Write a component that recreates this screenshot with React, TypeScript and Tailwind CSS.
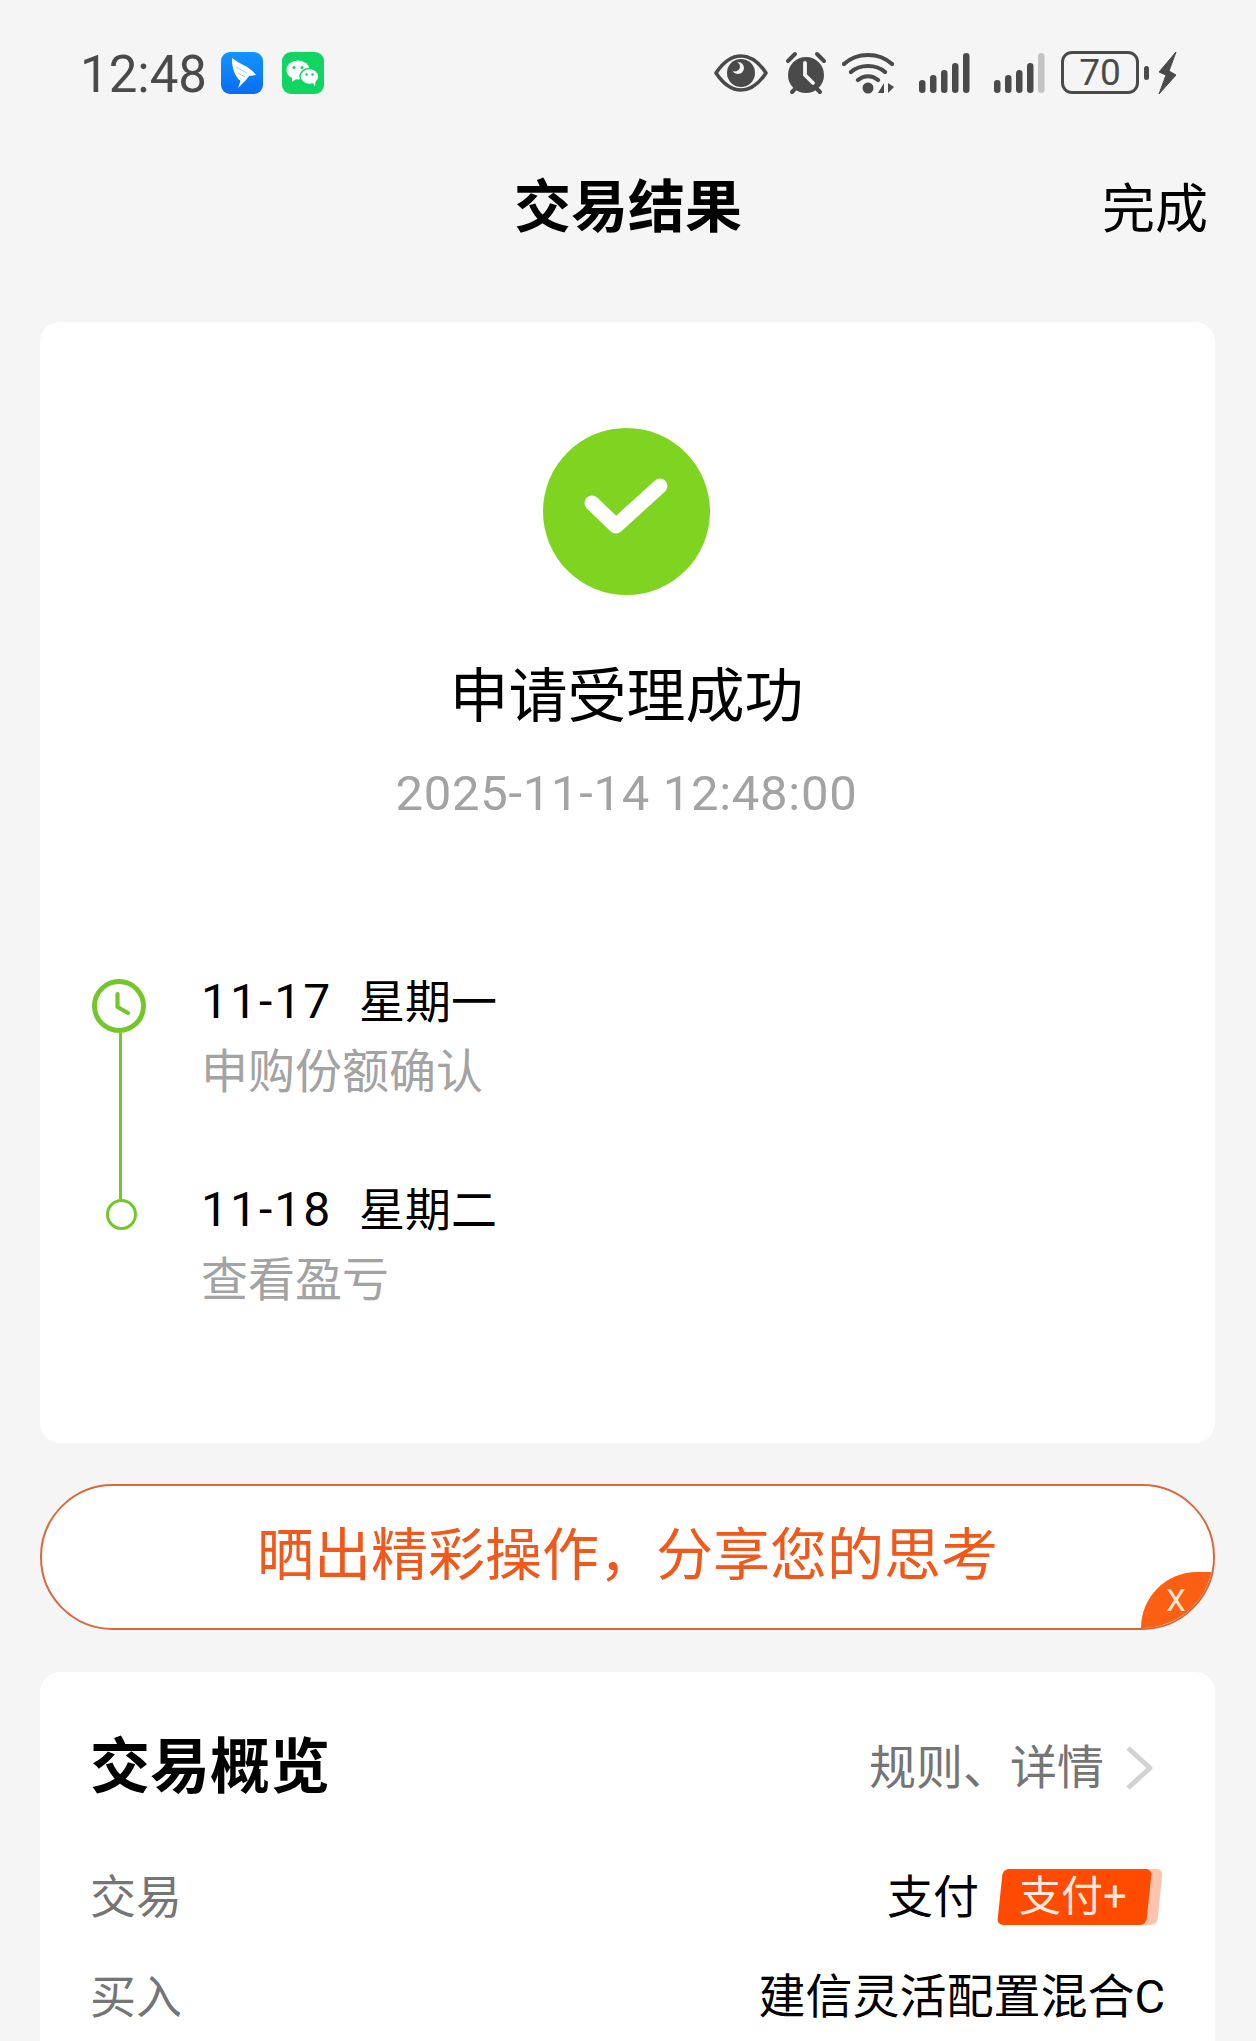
import React from 'react';

const CJK = "font-['Roboto','Noto_Sans_CJK_SC',sans-serif]";

const SignalBars = ({ lastDim = false }: { lastDim?: boolean }) => (
    <svg width="52" height="42" viewBox="0 0 52 42" className="block">
        <rect x="0" y="28" width="6.5" height="13" rx="3.2" fill="#4a4a4a" />
        <rect x="11" y="23" width="6.5" height="18" rx="3.2" fill="#4a4a4a" />
        <rect x="22" y="18" width="6.5" height="23" rx="3.2" fill="#4a4a4a" />
        <rect x="33" y="11" width="6.5" height="30" rx="3.2" fill="#4a4a4a" />
        <rect x="44" y="1" width="6.5" height="40" rx="3.2" fill={lastDim ? '#c4c4c4' : '#4a4a4a'} />
    </svg>
);

const AppBadges = () => (
    <div className="flex items-center gap-[19px] ml-[14px] -mt-[2px]">
        <svg width="42" height="42" viewBox="0 0 42 42" className="block">
            <defs>
                <linearGradient id="dingBg" x1="0" y1="0" x2="0" y2="1">
                    <stop offset="0" stopColor="#1296ff" />
                    <stop offset="1" stopColor="#0a6cf0" />
                </linearGradient>
            </defs>
            <rect width="42" height="42" rx="9" fill="url(#dingBg)" />
            <path d="M11 6 C18 12 29 14 35 23 L28 24 L25 28 L17 36 L19.5 29 C14 25 10.5 15 11 6Z" fill="#fff" />
            <path d="M15 15 L26 21 M17 21 L24 25" stroke="#9fd2ff" strokeWidth="1" fill="none" />
        </svg>
        <svg width="42" height="42" viewBox="0 0 42 42" className="block">
            <rect width="42" height="42" rx="9" fill="#10d562" />
            <ellipse cx="16" cy="18" rx="11.5" ry="9.5" fill="#fff" />
            <path d="M10 25 L10 30 L15 26.5Z" fill="#fff" />
            <ellipse cx="27.5" cy="24.5" rx="9.5" ry="8" fill="#fff" stroke="#10d562" strokeWidth="1.5" />
            <path d="M31 31 L33 34.5 L33.5 29Z" fill="#fff" />
            <circle cx="12" cy="15.5" r="1.5" fill="#10d562" />
            <circle cx="20" cy="15.5" r="1.5" fill="#10d562" />
            <circle cx="24.5" cy="22.5" r="1.3" fill="#10d562" />
            <circle cx="30.5" cy="22.5" r="1.3" fill="#10d562" />
        </svg>
    </div>
);

const StatusIcons = () => (
    <div className="flex items-center -mt-[3px]">
        {/* eye */}
        <svg width="54" height="38" viewBox="0 0 54 38" className="block">
            <path d="M2 19 C10 7 18 2 27 2 C36 2 44 7 52 19 C44 31 36 36 27 36 C18 36 10 31 2 19Z" fill="none" stroke="#4a4a4a" strokeWidth="3.6" strokeLinejoin="round" />
            <circle cx="27" cy="19" r="14" fill="#4a4a4a" />
            <circle cx="24" cy="14" r="6" fill="#f5f5f5" />
            <circle cx="21" cy="12.5" r="5" fill="#4a4a4a" />
        </svg>
        {/* alarm */}
        <svg width="44" height="44" viewBox="0 0 44 44" className="block ml-[16px]">
            <circle cx="22" cy="24" r="18" fill="#4a4a4a" />
            <path d="M4 10 L11 3 M33 3 L40 10 M8 41 L12 37 M36 41 L32 37" stroke="#4a4a4a" strokeWidth="4" strokeLinecap="round" />
            <path d="M21 12 L21 24 L29 32" stroke="#f5f5f5" strokeWidth="3.8" fill="none" strokeLinecap="round" strokeLinejoin="round" />
        </svg>
        {/* wifi */}
        <svg width="54" height="44" viewBox="0 0 54 44" className="block ml-[14px]">
            <path d="M2 13 C15 1 37 1 50 13 M9 21 C18 13 34 13 43 21 M16 29 C22 24 30 24 36 29" fill="none" stroke="#4a4a4a" strokeWidth="4.2" strokeLinecap="round" />
            <circle cx="26" cy="37" r="5.5" fill="#4a4a4a" />
            <path d="M42 32 L42 42 L36 42Z M46 32 L46 42 L52 36Z" fill="#4a4a4a" />
        </svg>
        <div className="ml-[23px]"><SignalBars /></div>
        <div className="ml-[23px]"><SignalBars lastDim /></div>
        {/* battery */}
        <div className="ml-[15px] flex items-center">
            <div className="w-[78px] h-[43px] rounded-[11px] border-[3px] border-[#4a4a4a] flex items-center justify-center text-[#4a4a4a] text-[37px] leading-none font-['Roboto',sans-serif]">70</div>
            <div className="w-[5px] h-[14px] rounded-full bg-[#4a4a4a] ml-[5px]" />
        </div>
        <svg width="22" height="44" viewBox="0 0 22 44" className="block ml-[7px]">
            <path d="M20 1 L3 21 L10 24 L3 43 L20 24 L13 20 L20 1Z" fill="#4a4a4a" stroke="#4a4a4a" strokeWidth="1" strokeLinejoin="round" />
        </svg>
    </div>
);

const StatusBar = () => (
    <div className="h-[146px] pl-[80px] pr-[78px] flex items-center justify-between pt-[2px]">
        <div className="flex items-center">
            <span className="text-[51px] leading-none text-[#4a4a4a] font-['Roboto',sans-serif]">12:48</span>
            <AppBadges />
        </div>
        <StatusIcons />
    </div>
);

const TimelineRow = ({ date, week, desc }: { date: string; week: string; desc: string }) => (
    <div className="h-[208px]">
        <p className="text-[46px] leading-[60px] text-black flex">
            <span className="w-[158px] text-[48px] tracking-[2px]">{date}</span>
            <span>{week}</span>
        </p>
        <p className="text-[47px] leading-[60px] mt-[10px] text-[#a3a3a3]">{desc}</p>
    </div>
);

const Timeline = () => (
    <div className="flex mt-[147px] pl-[52px]">
        <div className="w-[109px] flex flex-col items-start shrink-0 pt-[8px]">
            <svg width="54" height="54" viewBox="0 0 54 54" className="block">
                <circle cx="27" cy="27" r="24.5" fill="none" stroke="#74c62a" strokeWidth="5" />
                <path d="M25.5 15 L25.5 28 L36 34" fill="none" stroke="#74c62a" strokeWidth="4.2" strokeLinecap="round" strokeLinejoin="round" />
            </svg>
            <div className="w-[3px] h-[166px] bg-[#74c62a] ml-[27px]" />
            <div className="w-[31px] h-[31px] rounded-full border-[3px] border-[#74c62a] ml-[14px]" />
        </div>
        <div className="flex flex-col pt-[1px]">
            <TimelineRow date="11-17" week="星期一" desc="申购份额确认" />
            <TimelineRow date="11-18" week="星期二" desc="查看盈亏" />
        </div>
    </div>
);

const ResultCard = () => (
    <section className="bg-white rounded-[20px] h-[1121px] pt-[106px] flex flex-col">
        <div className="flex flex-col items-center pr-[2px]">
            <div className="w-[167px] h-[167px] rounded-full bg-[#7fd321] flex items-center justify-center">
                <svg width="90" height="70" viewBox="0 0 90 70" className="block">
                    <path d="M10 26 L34 49 L78 9" fill="none" stroke="#fff" strokeWidth="15" strokeLinecap="round" strokeLinejoin="round" />
                </svg>
            </div>
            <h2 className="text-[59px] leading-[80px] mt-[62px] text-black">申请受理成功</h2>
            <p className="text-[49px] leading-[60px] mt-[27px] text-[#a3a3a3] tracking-[0.7px]">2025-11-14 12:48:00</p>
        </div>
        <Timeline />
    </section>
);

const ShareBanner = () => (
    <div className="relative mt-[41px] h-[146px] rounded-full bg-white border-[2px] border-[#d9683a] flex items-center justify-center overflow-hidden">
        <span className="text-[57px] leading-none text-[#f0591c] -mt-[4px]">晒出精彩操作，分享您的思考</span>
        <div className="absolute right-0 bottom-0 w-[72px] h-[56px] bg-[#fa5f14] rounded-tl-[56px] flex items-center justify-center text-[#ffe6d5] text-[31px] leading-none pr-[2px]">X</div>
    </div>
);

const PayPlusTag = () => (
    <div className="relative ml-[18px] w-[163px] h-[56px]">
        <div className="absolute right-0 top-0 w-[50px] h-full bg-[#ffc4ae] rounded-[6px] -skew-x-6" />
        <div className="absolute left-[3px] top-0 w-[149px] h-full bg-[#ff4b00] rounded-[6px] -skew-x-6 flex items-center justify-center">
            <span className="skew-x-6 text-[#ffe9de] text-[42px] leading-none pr-[4px]">支付+</span>
        </div>
    </div>
);

const OverviewCard = () => (
    <section className="mt-[42px] bg-white rounded-t-[20px] flex-1 px-[50px] pt-[56px] overflow-hidden">
        <div className="flex items-center justify-between pr-[11px]">
            <h3 className="text-[60px] leading-[80px] font-bold text-black">交易概览</h3>
            <div className="flex items-center text-[47px] text-[#757575]">
                <span>规则、详情</span>
                <svg width="30" height="46" viewBox="0 0 30 46" className="block ml-[20px]">
                    <path d="M4 3 L26 23 L4 43" fill="none" stroke="#d2d2d2" strokeWidth="5" strokeLinejoin="round" />
                </svg>
            </div>
        </div>
        <div className="mt-[59px] flex items-center justify-between h-[60px] pr-[5px]">
            <span className="text-[46px] text-[#757575]">交易</span>
            <div className="flex items-center">
                <span className="text-[46px] text-black">支付</span>
                <PayPlusTag />
            </div>
        </div>
        <div className="mt-[40px] flex items-center justify-between h-[60px]">
            <span className="text-[46px] text-[#757575]">买入</span>
            <span className="text-[47px] text-black">建信灵活配置混合C</span>
        </div>
    </section>
);

export default function App() {
    return (
        <div className={`w-[1256px] h-[2041px] overflow-hidden bg-[#f5f5f5] flex flex-col ${CJK}`}>
            <StatusBar />
            <header className="relative h-[118px] flex items-center justify-center">
                <h1 className="text-[57px] leading-none font-bold text-black mt-[4px]">交易结果</h1>
                <button className="absolute right-[48px] top-[38px] text-[53px] leading-none text-black">完成</button>
            </header>
            <main className="flex-1 flex flex-col px-[40px] pt-[58px] pr-[41px]">
                <ResultCard />
                <ShareBanner />
                <OverviewCard />
            </main>
        </div>
    );
}
